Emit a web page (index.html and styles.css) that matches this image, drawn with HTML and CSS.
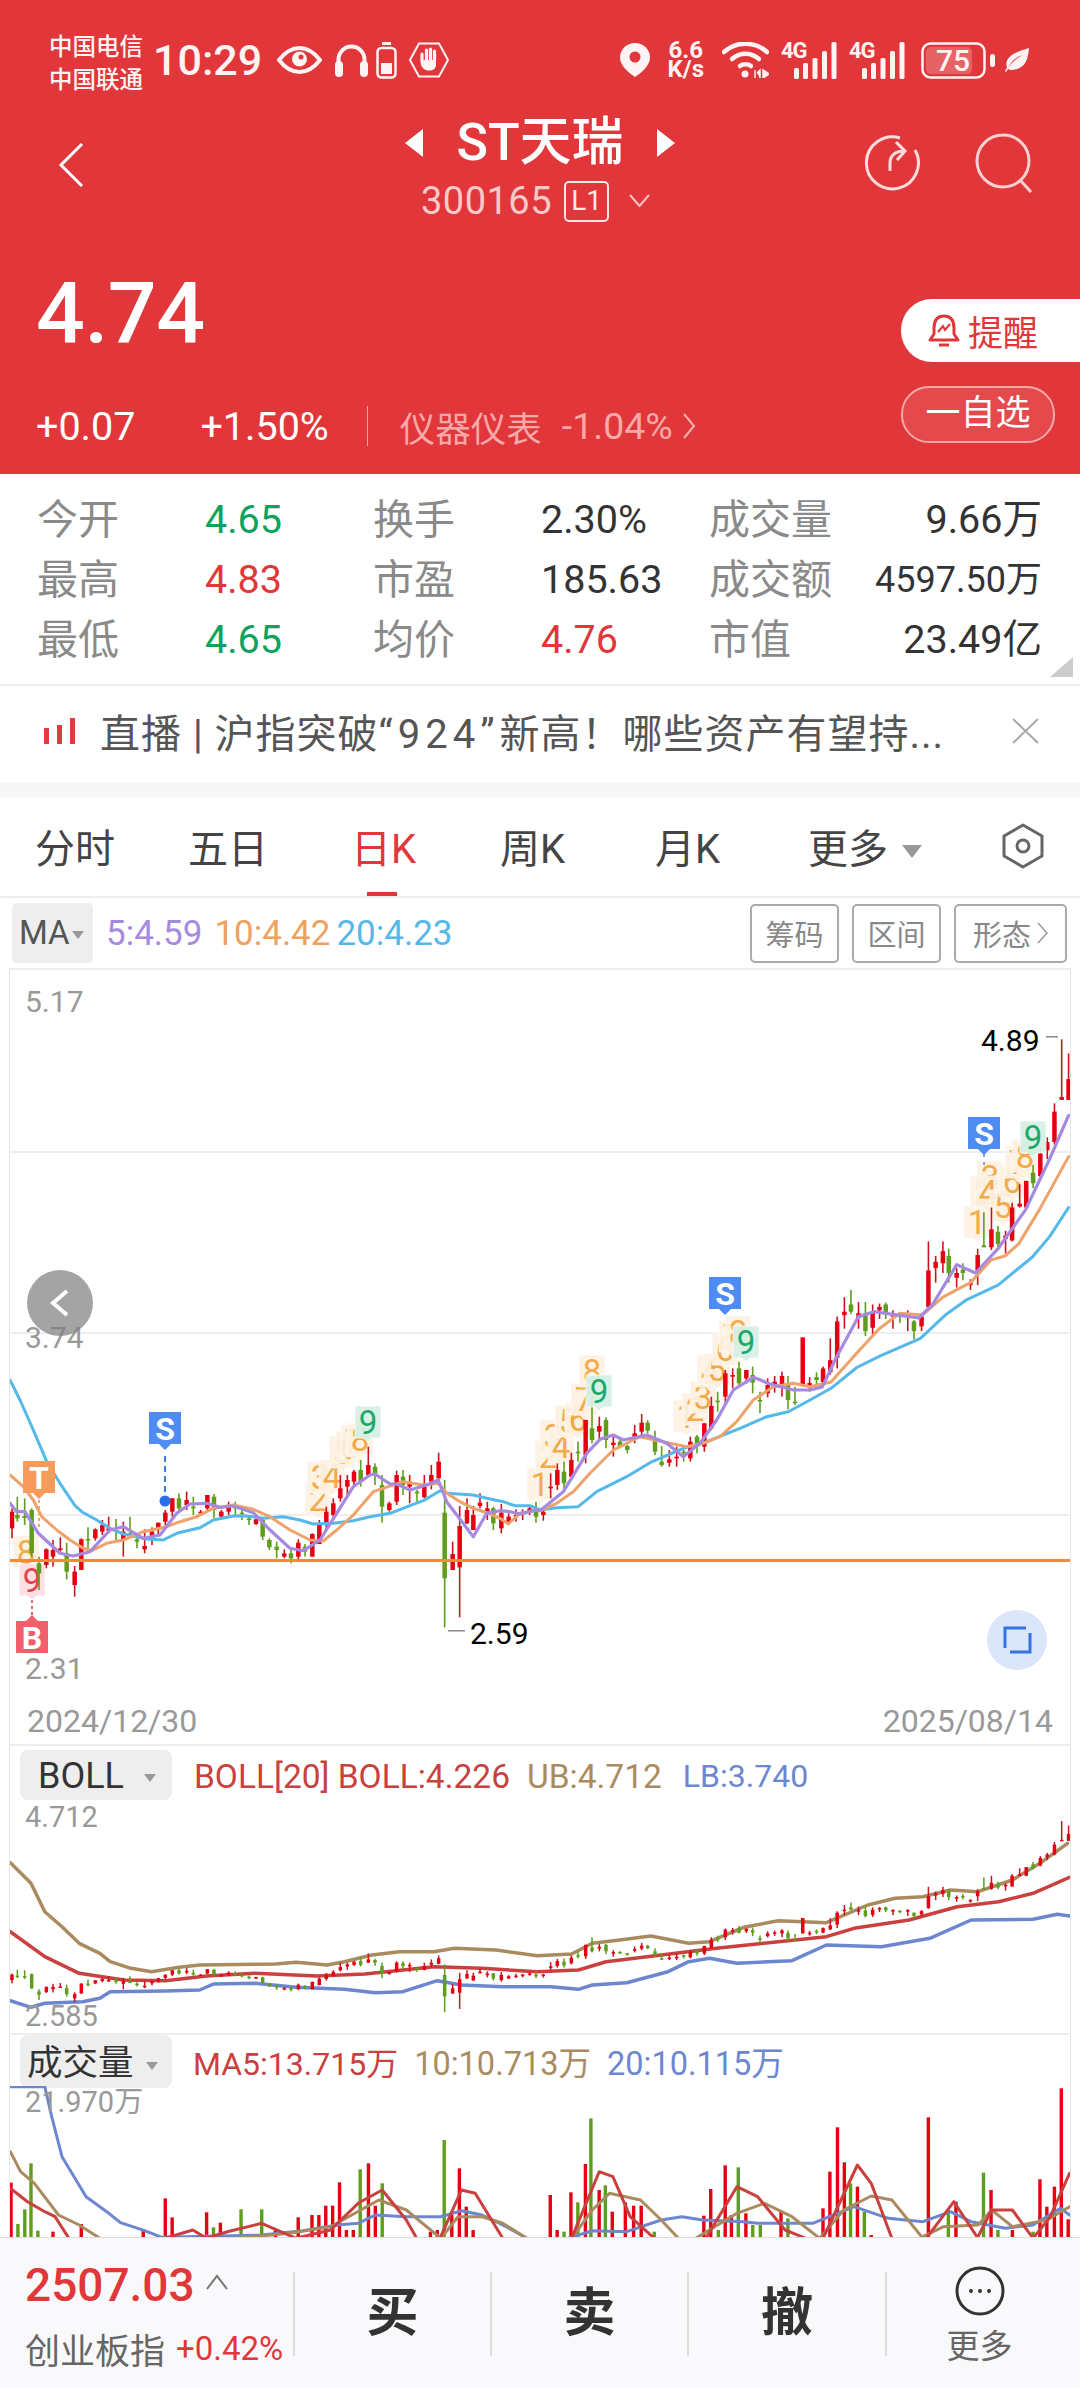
FILE: index.html
```html
<!DOCTYPE html>
<html lang="zh-CN">
<head>
    <meta charset="UTF-8">
    <meta name="viewport" content="width=device-width, initial-scale=1.0">
    <title>ST天瑞 300165</title>
    <link rel="stylesheet" href="styles.css">
</head>
<body>
    <header class="quote-head">
        <div class="status-bar">
            <div class="status-left">
                <div class="carrier"><span>中国电信</span><span>中国联通</span></div>
                <div class="clock">10:29</div>
                <svg class="icon-eye" width="45" height="28" viewBox="0 0 45 28"><path d="M2 14C9 5 15 2 22.5 2S36 5 43 14C36 23 30 26 22.5 26S9 23 2 14Z" fill="none" stroke="#fff3f3" stroke-width="4"/><circle cx="22.5" cy="13" r="7.5" fill="#fff3f3"/><circle cx="24" cy="11" r="2.5" fill="#e1373a"/></svg>
                <svg class="icon-phones" width="33" height="34" viewBox="0 0 33 34"><path d="M3.5 24V16.5a13 13 0 0 1 26 0V24" fill="none" stroke="#fff3f3" stroke-width="4"/><rect x="0" y="18" width="8" height="16" rx="4" fill="#fff3f3"/><rect x="25" y="18" width="8" height="16" rx="4" fill="#fff3f3"/></svg>
                <svg class="icon-cell" width="21" height="37" viewBox="0 0 21 37"><rect x="6" y="0" width="9" height="3" fill="#fff3f3"/><rect x="1.5" y="6" width="18" height="29.5" rx="4" fill="none" stroke="#fff3f3" stroke-width="2.5"/><rect x="5" y="21" width="11" height="11" fill="#fff3f3"/></svg>
                <svg class="icon-hand" width="40" height="36" viewBox="0 0 40 36"><polygon points="10,1.500 30,1.500 39,18 30,34.500 10,34.500 1,18" fill="none" stroke="#fff3f3" stroke-width="2"/><path d="M13 12V20M17.500 8V18M21.500 7V18M25.500 9V19" stroke="#fff3f3" stroke-width="3.200" stroke-linecap="round" fill="none"/><path d="M12 18H27V22C27 27 24 28.500 20 28.500C16 28.500 14 27 12 23Z" fill="#fff3f3"/></svg>
            </div>
            <div class="status-right">
                <svg class="icon-pin" width="30" height="34" viewBox="0 0 30 34"><path d="M15 0C6.500 0 0 6.500 0 14.500 0 23 9 30 15 34 21 30 30 23 30 14.500 30 6.500 23.500 0 15 0Z" fill="#fff3f3"/><circle cx="15" cy="14" r="5.500" fill="#e1373a"/></svg>
                <div class="net-speed"><span>6.6</span><span>K/s</span></div>
                <svg class="icon-wifi" width="47" height="36" viewBox="0 0 47 36"><g fill="none" stroke="#fff3f3" stroke-width="4.500" stroke-linecap="round"><path d="M2 10C14 -1 33 -1 45 10"/><path d="M10 17C18 10 29 10 37 17"/><path d="M18 24C21 21.500 26 21.500 29 24"/></g><circle cx="23" cy="32" r="3.500" fill="#fff3f3"/><path d="M33 28V36M38 36V28L35 31M41 28V36L47 32Z" fill="#fff3f3" stroke="#fff3f3" stroke-width="1.500"/></svg>
                <svg class="icon-signal" width="56" height="43" viewBox="0 -6 56 43"><text class="sig-label" x="0" y="16">4G</text><g fill="#fff3f3"><rect x="13" y="26" width="5" height="11" rx="1.500"/><rect x="22" y="21" width="5" height="16" rx="1.500"/><rect x="31.500" y="16" width="5" height="21" rx="1.500"/><rect x="41" y="9" width="5" height="28" rx="1.500"/><rect x="50.500" y="0" width="5" height="37" rx="1.500"/></g></svg>
                <svg class="icon-signal second" width="56" height="43" viewBox="0 -6 56 43"><text class="sig-label" x="0" y="16">4G</text><g fill="#fff3f3"><rect x="13" y="26" width="5" height="11" rx="1.500"/><rect x="22" y="21" width="5" height="16" rx="1.500"/><rect x="31.500" y="16" width="5" height="21" rx="1.500"/><rect x="41" y="9" width="5" height="28" rx="1.500"/><rect x="50.500" y="0" width="5" height="37" rx="1.500"/></g></svg>
                <svg class="icon-battery" width="74" height="37" viewBox="0 0 74 37"><rect x="1.500" y="1.500" width="62" height="34" rx="8" fill="none" stroke="#fff3f3" stroke-width="2.500"/><rect x="5" y="5" width="46" height="27" rx="5" fill="#fff" fill-opacity="0.22"/><rect x="69" y="12" width="5" height="13" rx="2.500" fill="#fff3f3"/><text class="batt-label" x="32" y="29" text-anchor="middle">75</text></svg>
                <svg class="icon-leaf" width="24" height="24" viewBox="0 0 24 24"><path d="M24 0C23 9 22 21 7 22 5.500 22 4 21.500 3 21L1 24 0 23 2 19.500C-2 8 14 3 24 0ZM3 20C8 13 12 10 18 7 11 9 6 13 3 20Z" fill="#fff3f3" fill-rule="evenodd"/></svg>
            </div>
        </div>

        <div class="nav-row">
            <div class="nav-back">
                <svg width="26" height="46" viewBox="0 0 26 46"><path d="M24 2L3 23L24 44" fill="none" stroke="#fff" stroke-width="3"/></svg>
            </div>
            <div class="nav-title">
                <div class="title-line">
                    <span class="arrow-left"></span>
                    <span class="stock-name">ST天瑞</span>
                    <span class="arrow-right"></span>
                </div>
                <div class="code-line">
                    <span class="stock-code">300165</span>
                    <span class="level-tag">L1</span>
                    <svg class="code-caret" width="21" height="14" viewBox="0 0 21 14"><path d="M1 1L10.500 12L20 1" fill="none" stroke="#f9c3c3" stroke-width="2"/></svg>
                </div>
            </div>
            <div class="nav-actions">
                <svg width="58" height="58" viewBox="0 0 58 58"><path d="M37 5A26 26 0 1 0 52 17" fill="none" stroke="#fbdcdc" stroke-width="3"/><path d="M27 38V30C27 23 32 18 41 18M33 9L42 18L34 27" fill="none" stroke="#fbdcdc" stroke-width="3"/></svg>
                <svg width="58" height="60" viewBox="0 0 58 60"><circle cx="28" cy="28" r="26" fill="none" stroke="#fbd0d0" stroke-width="3"/><path d="M45 47L56 59" stroke="#fbd0d0" stroke-width="3"/></svg>
            </div>
        </div>

        <div class="price-block">
            <div class="price-left">
                <div class="last-price">4.74</div>
                <div class="change-row">
                    <span class="chg-abs">+0.07</span>
                    <span class="chg-pct">+1.50%</span>
                    <span class="chg-divider"></span>
                    <span class="sector-name">仪器仪表</span>
                    <span class="sector-pct">-1.04%</span>
                    <svg width="14" height="28" viewBox="0 0 14 28"><path d="M2 2L12 14L2 26" fill="none" stroke="#f9b0b0" stroke-width="2"/></svg>
                </div>
            </div>
            <div class="price-right">
                <div class="remind-btn">
                    <svg width="32" height="36" viewBox="0 0 32 36"><path d="M16 3C8 3 6 9 6 15V21L2 27H30L26 21V15C26 9 24 3 16 3Z" fill="none" stroke="#e1373a" stroke-width="3" stroke-linejoin="round"/><path d="M11 32H21" stroke="#e1373a" stroke-width="3"/><path d="M10 19L15 13L17 17L22 11" fill="none" stroke="#e1373a" stroke-width="2"/></svg>
                    <span>提醒</span>
                </div>
                <div class="watch-btn">一自选</div>
            </div>
        </div>
    </header>

    <section class="stats">
        <span class="stat-label">今开</span><span class="stat-val green">4.65</span>
        <span class="stat-label">换手</span><span class="stat-val">2.30%</span>
        <span class="stat-label">成交量</span><span class="stat-val right">9.66万</span>
        <span class="stat-label">最高</span><span class="stat-val red">4.83</span>
        <span class="stat-label">市盈</span><span class="stat-val">185.63</span>
        <span class="stat-label">成交额</span><span class="stat-val right small">4597.50万</span>
        <span class="stat-label">最低</span><span class="stat-val green">4.65</span>
        <span class="stat-label">均价</span><span class="stat-val red">4.76</span>
        <span class="stat-label">市值</span><span class="stat-val right wide">23.49亿</span>
        <span class="stats-corner"></span>
    </section>

    <section class="live-banner">
        <svg width="32" height="26" viewBox="0 0 32 26"><rect x="0" y="10" width="5" height="16" fill="#dc3b40"/><rect x="13" y="7" width="5" height="19" fill="#dc3b40"/><rect x="26" y="0" width="5" height="26" fill="#dc3b40"/></svg>
        <span class="live-text">直播 | 沪指突破<span class="live-num">“924”</span>新高！哪些资产有望持...</span>
        <svg width="27" height="26" viewBox="0 0 27 26"><path d="M1 1L26 25M26 1L1 25" stroke="#a8a8a8" stroke-width="2"/></svg>
    </section>

    <nav class="period-tabs">
        <span>分时</span>
        <span>五日</span>
        <span class="active">日K</span>
        <span>周K</span>
        <span>月K</span>
        <span class="more-tab">更多<i class="tri"></i></span>
        <svg width="42" height="46" viewBox="0 0 42 46"><polygon points="21,2 40,13 40,33 21,44 2,33 2,13" fill="none" stroke="#666" stroke-width="3" stroke-linejoin="round"/><circle cx="21" cy="23" r="6" fill="none" stroke="#666" stroke-width="3"/></svg>
    </nav>

    <div class="ma-row">
        <div class="ma-select">MA<i class="tri tiny"></i></div>
        <span class="ma-5">5:4.59</span>
        <span class="ma-10">10:4.42</span>
        <span class="ma-20">20:4.23</span>
        <div class="tool-btns">
            <span class="tool-btn">筹码</span>
            <span class="tool-btn">区间</span>
            <span class="tool-btn">形态<svg width="11" height="22" viewBox="0 0 11 22"><path d="M1 1L10 11L1 21" fill="none" stroke="#999" stroke-width="1.500"/></svg></span>
        </div>
    </div>

    <section class="panel kline-panel">
        <svg id="kline" class="chart" width="1060" height="727" viewBox="10 970 1060 727"></svg>
        <div class="date-row"><span>2024/12/30</span><span>2025/08/14</span></div>
    </section>

    <section class="panel boll-panel">
        <div class="legend-row">
            <div class="ind-select">BOLL<i class="tri tiny"></i></div>
            <span class="leg-red">BOLL[20] BOLL:4.226</span>
            <span class="leg-tan">UB:4.712</span>
            <span class="leg-blue">LB:3.740</span>
        </div>
        <svg id="boll" class="chart" width="1060" height="233" viewBox="10 1800 1060 233"></svg>
    </section>

    <section class="panel vol-panel">
        <div class="legend-row">
            <div class="ind-select cjk">成交量<i class="tri tiny"></i></div>
            <span class="leg-red">MA5:13.715万</span>
            <span class="leg-tan">10:10.713万</span>
            <span class="leg-blue">20:10.115万</span>
        </div>
        <svg id="vol" class="chart" width="1060" height="151" viewBox="10 2086 1060 151"></svg>
    </section>

    <footer class="trade-bar">
        <div class="index-box">
            <div class="index-top"><span class="index-val">2507.03</span><svg width="24" height="16" viewBox="0 0 24 16"><path d="M2 15L12 2L22 15" fill="none" stroke="#777" stroke-width="2"/></svg></div>
            <div class="index-bottom"><span class="index-name">创业板指</span><span class="index-pct">+0.42%</span></div>
        </div>
        <div class="trade-btn">买</div>
        <div class="trade-btn">卖</div>
        <div class="trade-btn">撤</div>
        <div class="trade-more">
            <svg width="50" height="50" viewBox="0 0 50 50"><circle cx="25" cy="25" r="23" fill="none" stroke="#333" stroke-width="3"/><circle cx="16" cy="25" r="2" fill="#333"/><circle cx="25" cy="25" r="2" fill="#333"/><circle cx="34" cy="25" r="2" fill="#333"/></svg>
            <span>更多</span>
        </div>
    </footer>

    <script src="chart.js"></script>
</body>
</html>
```

FILE: styles.css
```css
* {
    box-sizing: border-box;
}

html, body {
    margin: 0;
    padding: 0;
}

body {
    width: 1080px;
    height: 2388px;
    overflow: hidden;
    background-color: #fff;
    font-family: Roboto, "Noto Sans CJK SC", sans-serif;
    color: #333;
}

/* red header */
.quote-head {
    height: 474px;
    background-color: #e1373a;
    color: #fff;
}

.status-bar {
    height: 100px;
    padding: 20px 51px 0 49px;
    display: flex;
    justify-content: space-between;
    align-items: center;
}

.status-left,
.status-right {
    display: flex;
    align-items: center;
}

.carrier {
    display: flex;
    flex-direction: column;
    margin-top: 7px;
    font-size: 23.5px;
    font-weight: 500;
    line-height: 33px;
    color: #fff3f3;
    white-space: nowrap;
}

.clock {
    margin-left: 10px;
    font-size: 43px;
    font-weight: 500;
    color: #fff3f3;
}

.icon-eye { margin-left: 15px; }
.icon-phones { margin-left: 13px; }
.icon-cell { margin-left: 8px; }
.icon-hand { margin-left: 12px; }

.net-speed {
    display: flex;
    flex-direction: column;
    align-items: center;
    margin-left: 18px;
    font-size: 24px;
    font-weight: 700;
    line-height: 19px;
    color: #fff3f3;
}

.icon-wifi { margin-left: 18px; }
.icon-signal { margin: -6px 0 0 12px; }
.icon-battery { margin-left: 16px; }
.icon-leaf { margin-left: 10px; }

.sig-label {
    font-size: 22px;
    font-weight: 700;
    letter-spacing: -1px;
    fill: #fff3f3;
}

.batt-label {
    font-size: 30px;
    font-weight: 500;
    fill: #fff3f3;
}

.nav-row {
    height: 122px;
    padding: 12px 58px 0 58px;
    display: grid;
    grid-template-columns: 1fr auto 1fr;
    align-items: center;
}

.nav-back {
    margin-bottom: 10px;
}

.nav-back svg {
    display: block;
}

.nav-actions {
    display: flex;
    justify-content: flex-end;
    gap: 54px;
    margin: 0 -11px 14px 0;
}

.nav-title {
    display: flex;
    flex-direction: column;
    align-items: center;
}

.title-line {
    display: flex;
    align-items: center;
    height: 62px;
    gap: 33px;
}

.stock-name {
    font-size: 52px;
    font-weight: 500;
    line-height: 62px;
}

.arrow-left,
.arrow-right {
    width: 0;
    height: 0;
    border-top: 14px solid transparent;
    border-bottom: 14px solid transparent;
}

.arrow-left { border-right: 18px solid #fff; }
.arrow-right { border-left: 18px solid #fff; }

.code-line {
    display: flex;
    align-items: center;
    height: 54px;
    margin-right: 9px;
    color: #f9c9c9;
}

.stock-code {
    font-size: 38px;
    letter-spacing: 0.5px;
}

.level-tag {
    width: 45px;
    height: 41px;
    margin-left: 12px;
    border: 2px solid #fde6e6;
    border-radius: 5px;
    font-size: 28px;
    line-height: 36px;
    text-align: center;
    color: #fde6e6;
}

.code-caret {
    margin-left: 20px;
}

.price-block {
    display: flex;
    justify-content: space-between;
    height: 252px;
}

.price-left {
    padding-left: 36px;
}

.last-price {
    margin-top: 48px;
    font-size: 86px;
    font-weight: 500;
    line-height: 88px;
    letter-spacing: -0.5px;
}

.change-row {
    display: flex;
    align-items: center;
    height: 48px;
    margin-top: 44px;
    font-size: 39.5px;
}

.chg-pct { margin-left: 65px; }

.chg-divider {
    width: 1px;
    height: 40px;
    margin: 0 32px 0 38px;
    background-color: #f2a0a0;
}

.sector-name {
    font-size: 35.5px;
    color: #f7a8a8;
}

.sector-pct {
    margin: 0 9px 0 20px;
    font-size: 37.5px;
    color: #f7a8a8;
}

.price-right {
    width: 179px;
    padding-top: 77px;
}

.remind-btn {
    display: flex;
    align-items: center;
    height: 63px;
    padding-left: 27px;
    gap: 8px;
    border-radius: 31px 0 0 31px;
    background-color: #fff;
    font-size: 35px;
    color: #e1373a;
}

.watch-btn {
    width: 154px;
    height: 57px;
    margin-top: 24px;
    border: 2px solid #f3a8a8;
    border-radius: 28px;
    background-color: #e5494c;
    font-size: 35px;
    line-height: 51px;
    text-align: center;
}

/* quote stats */
.stats {
    position: relative;
    height: 210px;
    padding: 16px 38px 0 37px;
    display: grid;
    grid-template-columns: 168px 168px 168px 168px 134px 199px;
    grid-auto-rows: 60px;
    align-items: center;
}

.stat-label {
    font-size: 41px;
    color: #8a8a8a;
    line-height: 60px;
}

.stat-val {
    font-size: 39.5px;
    color: #333;
    line-height: 60px;
}

.stat-val.right {
    justify-self: end;
    white-space: nowrap;
}

.stat-val.small {
    font-size: 36px;
}

.stat-val.green { color: #0da35e; }
.stat-val.red { color: #e1373a; }

.stats-corner {
    position: absolute;
    right: 7px;
    bottom: 7px;
    width: 0;
    height: 0;
    border-bottom: 20px solid #ccc;
    border-left: 23px solid transparent;
}

.live-banner {
    height: 113px;
    padding: 0 41px 6px 44px;
    display: flex;
    align-items: center;
    justify-content: space-between;
    border-top: 2px solid #eee;
    border-bottom: 15px solid #f7f7f7;
}

.live-text {
    flex: 1;
    margin-left: 24px;
    font-size: 40px;
    letter-spacing: 1px;
    color: #555;
    white-space: nowrap;
}

.live-num {
    letter-spacing: 5px;
}

/* period tabs */
.period-tabs {
    height: 101px;
    padding: 0 0 2px 35px;
    display: grid;
    grid-template-columns: 153px 163px 149px 155px 153px 194px 42px;
    align-items: center;
    border-bottom: 2px solid #eee;
    font-size: 40px;
    color: #444;
}

.period-tabs .active {
    position: relative;
    color: #e1373a;
}

.period-tabs .active::after {
    content: "";
    position: absolute;
    left: 16px;
    bottom: -21px;
    width: 30px;
    height: 4px;
    background-color: #e1373a;
}

.tri {
    display: inline-block;
    width: 0;
    height: 0;
    margin-left: 14px;
    vertical-align: middle;
    border-top: 13px solid #999;
    border-left: 10px solid transparent;
    border-right: 10px solid transparent;
}

.tri.tiny {
    margin-left: 10px;
    border-top: 8px solid #999;
    border-left: 6px solid transparent;
    border-right: 6px solid transparent;
}

.ma-row {
    height: 70px;
    padding: 5px 13px 5px 12px;
    display: flex;
    align-items: center;
    font-size: 35px;
}

.ma-select {
    width: 81px;
    height: 60px;
    border-radius: 5px;
    background-color: #eee;
    font-size: 33px;
    line-height: 60px;
    padding-left: 7px;
    color: #555;
    white-space: nowrap;
}

.ma-select .tri.tiny {
    margin-left: 2px;
}

.ma-5 { margin-left: 13px; color: #a58ae0; }
.ma-10 { margin-left: 12px; color: #efa25f; }
.ma-20 { margin-left: 6px; color: #55b8ea; }

.tool-btns {
    margin-left: auto;
    display: flex;
    gap: 13px;
}

.tool-btn {
    display: flex;
    align-items: center;
    justify-content: center;
    gap: 6px;
    width: 89px;
    height: 59px;
    border: 2px solid #aaa;
    border-radius: 5px;
    font-size: 29px;
    color: #888;
}

.tool-btn:last-child {
    width: 113px;
}

/* chart panels */
.panel {
    margin: 0 9px;
    border-top: 2px solid #eee;
    border-left: 1px solid #e6e6e6;
    border-right: 1px solid #e6e6e6;
}

.chart {
    display: block;
    overflow: hidden;
}

.kline-panel {
    height: 776px;
}

.date-row {
    height: 47px;
    padding: 0 17px;
    display: flex;
    justify-content: space-between;
    align-items: center;
    font-size: 32px;
    color: #999;
}

.boll-panel {
    height: 289px;
}

.vol-panel {
    height: 204px;
}

.legend-row {
    display: flex;
    align-items: center;
    height: 54px;
    padding: 6px 0 0 10px;
    font-size: 33.5px;
    white-space: nowrap;
}

.vol-panel .legend-row {
    height: 51px;
    padding-top: 0;
    font-size: 32.5px;
}

.ind-select {
    align-self: flex-start;
    width: 152px;
    height: 50px;
    margin-top: -2px;
    padding-left: 18px;
    margin-right: 22px;
    border-radius: 8px;
    background-color: #eee;
    font-size: 36px;
    line-height: 53px;
    color: #333;
}

.ind-select.cjk {
    height: 53px;
    margin-top: 0;
    margin-right: 21px;
    padding-left: 7px;
    line-height: 56px;
    font-size: 35.5px;
}

.ind-select .tri.tiny {
    margin-left: 20px;
}

.ind-select.cjk .tri.tiny {
    margin-left: 12px;
}

.leg-red { color: #c9403f; }
.leg-tan { margin-left: 17px; color: #a98b5f; }
.leg-blue { margin-left: 21px; font-size: 32px; color: #6c87cf; }

.vol-panel .leg-red {
    font-size: 32px;
}

.vol-panel .leg-tan,
.vol-panel .leg-blue {
    margin-left: 16px;
    font-size: 32.5px;
}

.axis-label {
    font-size: 30px;
    fill: #999;
}

.axis-label.small {
    font-size: 29px;
}

.peak-label {
    font-size: 30px;
    fill: #000;
}

.tag-digit {
    font-size: 33px;
    text-anchor: middle;
}

.badge-letter {
    font-size: 32px;
    font-weight: 700;
    text-anchor: middle;
    fill: #fff;
}

/* bottom trade bar */
.trade-bar {
    height: 151px;
    padding-top: 34px;
    display: grid;
    grid-template-columns: 293px 197px 197px 198px 195px;
    grid-auto-rows: 84px;
    border-top: 1px solid #ddd;
    background-color: #f9f9fb;
}

.index-box {
    padding-left: 25px;
}

.index-top {
    display: flex;
    align-items: center;
    height: 40px;
    margin-top: -7px;
}

.index-top svg {
    margin: 0 0 6px 10px;
}

.index-val {
    font-size: 46px;
    font-weight: 500;
    line-height: 40px;
    color: #e1373a;
}

.index-bottom {
    display: flex;
    align-items: center;
    margin-top: 18px;
}

.index-name {
    font-size: 35px;
    color: #666;
}

.index-pct {
    margin-left: 11px;
    font-size: 33px;
    color: #e1373a;
}

.trade-btn {
    border-left: 2px solid #ddd;
    font-size: 52px;
    font-weight: 700;
    line-height: 84px;
    text-align: center;
    color: #333;
}

.trade-more {
    border-left: 2px solid #ddd;
    padding-right: 8px;
    font-size: 33px;
    color: #666;
    text-align: center;
}

.trade-more svg {
    display: block;
    margin: -6px auto 0;
}

.trade-more span {
    display: block;
    margin-top: 9px;
    line-height: 44px;
}
```

FILE: chart.js
```js
// K line, BOLL and volume panels. Values were read off the quote screen in
// screen pixels, then mapped to each panel.
const SVG_NS = 'http://www.w3.org/2000/svg';
const RED = '#e60012';
const RED_WICK = '#c8141e';
const GREEN = '#5f9e1c';

function el(parent, name, attrs, text) {
    const node = document.createElementNS(SVG_NS, name);
    for (const key in attrs) {
        node.setAttribute(key, attrs[key]);
    }
    if (text !== undefined) {
        node.textContent = text;
    }
    parent.appendChild(node);
    return node;
}

// scale a block of [x, y] points to screen pixels
function points(list, ox, oy, sx, sy) {
    return list.map(p => [ox + p[0] / sx, oy + p[1] / sy]);
}

// [x, high, low, bodyTop, bodyBottom, isRed]
function candles(list, ox, oy, sx, sy) {
    return list.map(c => ({
        x: ox + c[0] / sx,
        hi: oy + c[1] / sy,
        lo: oy + c[2] / sy,
        top: oy + c[3] / sy,
        bot: oy + c[4] / sy,
        up: c[5] === 1
    }));
}

const kData = [].concat(
    candles([
        [36,505,595,515,565,1],[52,470,545,525,535,0],[74,475,555,528,534,0],[95,505,650,510,640,0],
        [117,650,750,670,700,0],[139,625,685,628,675,1],[159,600,680,630,650,1],[181,592,635,625,630,1],
        [200,608,718,640,695,0],[224,678,770,695,735,1],[244,595,690,598,690,1],[264,562,625,597,600,0],
        [286,565,602,568,595,1],[307,540,585,555,575,1],[326,530,580,565,572,1],[348,537,600,570,575,0],
        [370,545,650,575,600,1],[390,530,590,580,585,0],[411,585,625,598,605,0],[434,568,640,618,628,1],
        [456,562,615,575,595,1],[475,548,590,548,570,1],[496,510,555,518,545,1],[517,475,530,475,515,1],
        [537,460,515,475,505,0],[560,455,510,480,495,1],[580,470,525,500,505,0],[602,510,525,515,520,1],
        [622,465,510,465,505,1],[642,462,535,470,510,0],[664,510,535,515,530,1],[686,485,525,495,515,1],
        [706,485,525,500,505,0],[726,505,540,518,521,0],[747,525,555,535,540,0],[768,535,555,538,552,1],
        [788,535,600,540,590,0],[808,595,630,600,622,0]
    ], 0, 1340, 3, 3),
    candles([
        [20,605,655,620,630,0],[43,628,655,640,650,1],[63,628,670,640,655,0],[85,598,658,608,650,1],
        [105,612,650,620,635,0],[127,580,650,582,650,1],[148,540,612,552,612,1],[169,500,570,515,555,1],
        [190,475,535,490,525,1],[211,405,485,445,475,1],[232,405,470,420,440,1],[252,390,435,395,425,1],
        [272,360,440,390,425,0],[295,320,405,375,405,1],[315,370,435,380,405,0],[336,405,548,435,500,0],
        [358,485,515,490,510,1],[380,392,495,405,485,1],[399,390,465,410,435,0],[419,405,490,425,440,1],
        [441,450,490,455,460,0],[463,405,475,435,472,1],[484,375,448,405,425,1],[506,338,420,365,415,1],
        [524,420,862,518,715,0],[548,605,690,642,690,1],[569,498,832,558,682,1],[591,475,552,510,550,1],
        [610,498,570,525,570,1],[630,460,505,488,498,1],[652,485,540,505,520,1],[670,500,570,505,550,0],
        [694,492,580,518,565,1],[716,520,555,530,550,1],[738,508,545,525,530,1],[758,508,540,515,520,1],
        [779,495,525,505,512,1],[798,485,548,515,530,0]
    ], 270, 1340, 3, 3),
    candles([
        [10,808,842,815,825,1],[32,700,775,740,745,1],[52,670,750,690,735,1],[72,665,750,695,730,0],
        [94,638,720,660,710,1],[114,605,665,635,640,0],[137,540,670,540,645,1],[156,470,610,565,600,0],
        [178,530,600,558,575,1],[198,532,625,540,600,0],[220,590,650,608,615,1],[240,600,625,605,618,0],
        [262,615,640,618,630,0],[284,555,610,580,595,1],[305,522,590,548,575,1],[323,540,580,548,572,0],
        [345,572,645,600,635,0],[365,618,680,665,675,0],[388,630,680,658,668,1],[410,620,680,650,655,1],
        [431,630,665,635,640,0],[451,590,665,605,655,1],[471,585,640,590,620,0],[493,550,635,550,620,1],
        [514,470,570,498,565,1],[533,455,515,482,485,0],[556,390,495,400,470,1],[578,385,445,405,410,1],
        [597,365,435,385,430,0],[619,390,430,390,415,1],[638,380,460,405,428,0],[660,455,520,480,483,0],
        [683,415,472,435,460,1],[704,408,458,425,432,1],[726,395,470,408,435,1],[744,408,508,430,480,0],
        [765,440,495,485,488,0]
    ], 540, 1240, 3, 3),
    candles([
        [763,758,856,758,856,1],[783,840,870,852,858,1],[803,830,860,840,846,0],[822,818,855,822,850,1],
        [843,760,835,805,830,1],[863,715,822,725,800,1],[884,675,740,705,712,1],[903,660,710,690,705,0],
        [925,685,740,708,718,1],[945,685,755,710,745,0],[966,690,752,705,738,1],[986,688,720,695,702,1],
        [1004,686,720,690,710,0],[1025,702,740,708,715,1],[1045,708,728,712,716,0],[1068,702,745,708,712,1],
        [1086,722,762,725,745,0],[1108,708,745,715,735,1],[1128,560,700,620,695,1],[1149,590,645,602,615,1],
        [1170,560,625,580,605,1],[1187,575,645,590,625,0],[1210,615,655,625,635,1],[1228,605,640,618,625,0],
        [1250,638,660,645,650,1],[1271,575,650,588,620,1],[1289,500,572,568,572,0],[1311,490,578,535,572,1],
        [1330,528,575,540,565,0],[1352,538,585,548,555,1],[1371,480,560,490,558,1],[1393,442,490,482,488,1],
        [1412,435,492,435,490,1],[1432,402,450,418,440,0],[1453,365,430,378,425,1],[1473,345,390,355,372,1],
        [1494,275,360,292,355,1],[1515,143,268,262,268,1],[1535,172,268,225,268,1]
    ], 540, 970, 2.904, 2.063)
);

const ma20 = [].concat(
    points([[30,120],[60,180],[100,270],[140,365],[180,430],[225,497],[245,515],[290,540],[330,565],[370,582],[410,590],[440,597],[490,600],[530,580],[600,563],[640,540],[700,528],[740,528],[790,535]], 0, 1340, 3, 3),
    points([[40,530],[90,540],[130,552],[190,550],[250,542],[300,530],[360,520],[420,497],[460,482],[510,452],[530,460],[610,465],[650,475],[700,485],[735,497],[780,497],[810,510]], 270, 1340, 3, 3),
    points([[0,810],[50,803],[115,800],[170,755],[260,710],[330,668],[430,625],[500,605],[600,565],[680,530],[745,515],[810,480]], 540, 1240, 3, 3),
    points([[845,863],[920,820],[985,797],[1105,760],[1180,710],[1240,680],[1330,650],[1430,592],[1480,550],[1535,490]], 540, 970, 2.904, 2.063)
);

const ma10 = [].concat(
    points([[30,405],[70,440],[100,480],[125,530],[170,570],[210,600],[250,625],[275,632],[320,610],[370,600],[430,575],[500,560],[540,545],[590,530],[640,505],[700,495],[760,508],[810,530]], 0, 1340, 3, 3),
    points([[60,570],[120,600],[160,603],[200,570],[250,525],[310,455],[400,425],[460,435],[505,430],[530,460],[570,485],[610,505],[650,518],[690,535],[715,552],[750,520],[800,510]], 270, 1340, 3, 3),
    points([[0,812],[50,790],[100,755],[150,700],[220,630],[300,590],[390,610],[440,620],[490,610],[540,590],[590,545],[640,480],[700,440],[760,430],[810,440]], 540, 1240, 3, 3),
    points([[845,850],[920,790],[985,740],[1045,708],[1110,712],[1170,675],[1250,645],[1310,598],[1350,590],[1390,565],[1450,495],[1535,385]], 540, 970, 2.904, 2.063)
);

const ma5 = [].concat(
    points([[30,490],[50,515],[75,515],[115,580],[180,640],[220,648],[270,635],[330,570],[370,560],[430,595],[480,585],[530,520],[570,492],[620,490],[660,502],[700,498],[760,518],[810,570]], 0, 1340, 3, 3),
    points([[60,625],[100,632],[150,600],[200,520],[250,440],[300,405],[315,402],[360,432],[380,432],[420,450],[470,435],[505,420],[530,485],[610,590],[650,520],[690,512],[720,515],[750,522],[800,510]], 270, 1340, 3, 3),
    points([[0,812],[70,755],[140,640],[180,598],[220,585],[250,600],[320,585],[380,610],[430,650],[480,610],[530,540],[580,450],[640,412],[690,432],[760,450],[810,450]], 540, 1240, 3, 3),
    points([[820,860],[860,800],[925,715],[970,705],[1040,712],[1100,718],[1140,690],[1210,608],[1265,625],[1330,575],[1410,495],[1480,390],[1535,300]], 540, 970, 2.904, 2.063)
);

// nine-turn digit tags: [x, y, digit]
const turnTags = [
    [26,1553,'8'],
    [318,1500,'2'],[320,1478,'3'],[332,1477,'4'],[342,1453,'5'],[349,1448,'6'],[354,1442,'7'],[360,1440,'8'],
    [540,1485,'1'],[548,1457,'2'],[553,1437,'3'],[561,1447,'4'],[568,1422,'5'],[578,1420,'6'],[584,1400,'7'],[592,1372,'8'],
    [686,1417,'1'],[695,1410,'2'],[703,1398,'3'],[710,1372,'4'],[717,1370,'5'],[725,1350,'6'],[732,1337,'7'],[738,1333,'8'],
    [977,1223,'1'],[983,1193,'2'],[990,1178,'3'],[988,1193,'4'],[1003,1207,'5'],[1012,1182,'6'],[1018,1163,'7'],[1025,1157,'8']
];

const nineTags = [[368,1423],[599,1392],[746,1343],[1033,1138]];

function polyline(parent, pts, color, width) {
    el(parent, 'polyline', {
        points: pts.map(p => p[0].toFixed(1) + ',' + p[1].toFixed(1)).join(' '),
        fill: 'none',
        stroke: color,
        'stroke-width': width,
        'stroke-linejoin': 'round',
        'stroke-linecap': 'round'
    });
}

function drawCandles(parent, data, bodyW, wickW, mapY) {
    data.forEach(c => {
        const top = mapY(c.top);
        const bot = mapY(c.bot);
        el(parent, 'rect', {
            x: c.x - wickW / 2, y: mapY(c.hi), width: wickW, height: mapY(c.lo) - mapY(c.hi),
            fill: c.up ? RED_WICK : GREEN
        });
        el(parent, 'rect', {
            x: c.x - bodyW / 2, y: top, width: bodyW, height: Math.max(bot - top, 1.5),
            fill: c.up ? RED : GREEN
        });
    });
}

function digitTag(parent, x, y, digit, bg, color, opacity) {
    const g = el(parent, 'g', { opacity: opacity });
    el(g, 'path', {
        d: `M${x - 13} ${y - 17}h26v32h-9l-4 4l-4 -4h-9z`,
        fill: bg, stroke: '#fff', 'stroke-width': 0.8
    });
    el(g, 'text', { class: 'tag-digit', x: x, y: y + 11, fill: color }, digit);
}

function badge(parent, x, y, letter, color, tipUp) {
    const d = tipUp
        ? `M${x - 16} ${y + 6}h10l6 -6l6 6h10v32h-32z`
        : `M${x - 16} ${y}h32v32h-10l-6 6l-6 -6h-10z`;
    el(parent, 'path', { d: d, fill: color });
    el(parent, 'text', { class: 'badge-letter', x: x, y: y + (tipUp ? 34 : 28) }, letter);
}

function drawKline() {
    const svg = document.getElementById('kline');

    [1152, 1333, 1515].forEach(y => {
        el(svg, 'rect', { x: 10, y: y - 1, width: 1060, height: 2, fill: '#eeeeee' });
    });

    turnTags.forEach(t => digitTag(svg, t[0], t[1], t[2], '#fdf1e2', '#f2a53c', 0.92));
    digitTag(svg, 32, 1581, '9', '#fbdfe2', '#e3404c', 1);

    drawCandles(svg, kData, 4.5, 1.6, y => y);

    el(svg, 'rect', { x: 10, y: 1559, width: 1060, height: 3, fill: '#f08a3c' });

    polyline(svg, ma20, '#55b8ea', 3);
    polyline(svg, ma10, '#efa26a', 3);
    polyline(svg, ma5, '#a58ae0', 3.2);

    nineTags.forEach(t => digitTag(svg, t[0], t[1], '9', '#d6f0e4', '#10a564', 0.95));

    // buy/sell flags
    el(svg, 'path', { d: 'M165 1456V1495', stroke: '#3f7fe0', 'stroke-width': 2, 'stroke-dasharray': '6 4' });
    el(svg, 'circle', { cx: 165, cy: 1501, r: 5.5, fill: '#2a6fe8' });
    el(svg, 'path', { d: 'M984 1154V1170', stroke: '#7fa6e8', 'stroke-width': 2, 'stroke-dasharray': '3 5' });
    el(svg, 'path', { d: 'M32 1600V1618', stroke: '#d96a72', 'stroke-width': 2, 'stroke-dasharray': '3 3' });
    el(svg, 'path', { d: 'M39 1494V1530', stroke: '#f4a46a', 'stroke-width': 2, 'stroke-dasharray': '3 3' });
    badge(svg, 165, 1412, 'S', '#4e8cf2');
    badge(svg, 725, 1277, 'S', '#4e8cf2');
    badge(svg, 984, 1117, 'S', '#4e8cf2');
    badge(svg, 39, 1461, 'T', '#f79a5a');
    badge(svg, 32, 1615, 'B', '#f0606c', true);

    // axis labels
    el(svg, 'text', { class: 'axis-label', x: 25, y: 1012 }, '5.17');
    el(svg, 'text', { class: 'axis-label', x: 25, y: 1348 }, '3.74');
    el(svg, 'text', { class: 'axis-label', x: 25, y: 1679 }, '2.31');

    el(svg, 'text', { class: 'peak-label', x: 981, y: 1051 }, '4.89');
    el(svg, 'rect', { x: 1046, y: 1036, width: 12, height: 1.5, fill: '#888' });
    el(svg, 'text', { class: 'peak-label', x: 470, y: 1644 }, '2.59');
    el(svg, 'rect', { x: 448, y: 1630, width: 17, height: 1.5, fill: '#888' });

    // edge handle and fullscreen button
    el(svg, 'ellipse', { cx: 60, cy: 1303, rx: 33, ry: 33, fill: 'rgba(125,125,125,0.7)' });
    el(svg, 'path', { d: 'M67 1291L53 1303L67 1315', fill: 'none', stroke: '#fff', 'stroke-width': 4 });
    el(svg, 'ellipse', { cx: 1017, cy: 1640, rx: 30, ry: 30, fill: '#dbe6fb' });
    el(svg, 'path', { d: 'M1005 1648V1628H1026M1030 1633V1652H1010', fill: 'none', stroke: '#3472e0', 'stroke-width': 3 });
}

function drawBoll() {
    const svg = document.getElementById('boll');
    const mapY = y => 1821 + (y - 1039) * 0.325;
    const pts = list => points(list, 0, 1730, 1.452, 3);

    polyline(svg, pts([[15,398],[45,460],[65,545],[90,590],[115,640],[145,670],[160,695],[190,715],[220,725],[260,712],[290,705],[400,702],[430,697],[475,705],[500,695],[540,675],[580,665],[630,665],[660,655],[720,660],[780,677],[830,672],[860,640],[900,630],[945,618],[1000,640],[1030,635],[1080,592],[1130,572],[1200,578],[1260,525],[1300,505],[1340,500],[1380,480],[1420,485],[1470,450],[1510,400],[1550,340]]), '#a98b5f', 3.5);
    polyline(svg, pts([[15,605],[65,680],[115,730],[180,750],[240,752],[300,738],[370,730],[460,738],[530,732],[630,710],[700,715],[780,725],[840,720],[880,695],[960,675],[1040,655],[1130,635],[1200,620],[1240,595],[1320,570],[1390,530],[1450,515],[1500,490],[1553,442]]), '#c9403f', 3.5);
    polyline(svg, pts([[15,812],[45,832],[65,820],[120,815],[145,805],[160,785],[240,783],[290,780],[310,762],[370,760],[430,772],[500,778],[545,788],[585,785],[635,752],[670,765],[730,770],[800,770],[840,778],[860,765],[910,758],[970,725],[1000,695],[1030,685],[1070,700],[1150,692],[1200,645],[1280,650],[1350,625],[1410,570],[1500,568],[1535,553],[1553,558]]), '#6c87cf', 3.5);

    drawCandles(svg, kData, 3.5, 1.5, mapY);

    el(svg, 'text', { class: 'axis-label small', x: 25, y: 1827 }, '4.712');
    el(svg, 'text', { class: 'axis-label small', x: 25, y: 2026 }, '2.585');
}

function drawVolume() {
    const svg = document.getElementById('vol');
    const base = 2237;
    const toX = x => x / 1.452;
    const toY = y => 2040 + y / 3;
    const pts = list => points(list, 0, 2040, 1.452, 3);

    const redBars = [[16,428],[77,575],[118,552],[208,570],[240,475],[250,532],[300,517],[320,548],[400,570],[433,532],[453,525],[463,525],[473,497],[483,497],[493,427],[503,570],[513,570],[535,370],[545,497],[625,575],[635,570],[656,525],[667,385],[677,500],[687,570],[799,465],[809,570],[829,457],[850,372],[870,450],[889,515],[908,487],[920,497],[931,497],[1022,527],[1032,447],[1053,376],[1062,525],[1083,520],[1134,515],[1195,505],[1205,395],[1216,262],[1226,367],[1245,440],[1265,585],[1348,232],[1388,485],[1439,450],[1470,570],[1510,418],[1520,500],[1531,440],[1541,145],[1551,538]];
    const greenBars = [[26,552],[36,508],[45,370],[55,572],[310,562],[350,508],[380,508],[523,388],[555,430],[645,300],[819,575],[839,487],[858,235],[879,436],[950,575],[1043,570],[1072,382],[1093,555],[1104,555],[1144,535],[1235,430],[1255,515],[1377,510],[1428,398],[1449,570],[1500,575]];

    redBars.forEach(b => el(svg, 'rect', { x: toX(b[0]) - 1.7, y: toY(b[1]), width: 3.4, height: base - toY(b[1]), fill: RED }));
    greenBars.forEach(b => el(svg, 'rect', { x: toX(b[0]) - 1.7, y: toY(b[1]), width: 3.4, height: base - toY(b[1]), fill: GREEN }));

    polyline(svg, pts([[15,140],[65,140],[75,230],[90,350],[125,470],[155,515],[175,548],[210,572],[235,592],[380,585],[440,572],[490,555],[520,550],[545,525],[590,530],[640,530],[670,512],[700,525],[735,560],[765,595]]), '#6c87cf', 3);
    polyline(svg, pts([[825,595],[860,572],[910,575],[960,540],[990,530],[1020,540],[1080,545],[1100,550],[1180,550],[1240,500],[1290,535],[1340,545],[1380,515],[1410,545],[1460,565],[1500,555],[1540,505],[1553,525]]), '#6c87cf', 3);

    [
        [[15,335],[30,395],[50,430],[85,525],[115,555],[145,595]],
        [[340,595],[420,580],[480,560],[550,480],[590,510],[640,595]],
        [[640,595],[665,530],[700,530],[730,550],[765,595]],
        [[830,595],[860,510],[885,460],[930,480],[960,540],[985,595]],
        [[1010,595],[1070,520],[1110,490],[1150,530],[1190,595]],
        [[1190,595],[1225,510],[1265,468],[1295,480],[1340,595]],
        [[1340,590],[1370,560],[1420,555],[1440,510],[1470,560],[1520,540],[1553,500]]
    ].forEach(line => polyline(svg, pts(line), '#a98b5f', 3));

    [
        [[15,445],[40,485],[65,515],[80,530],[100,595]],
        [[240,595],[280,570],[300,595],[330,575],[380,550],[430,595],[480,570],[520,490],[555,450],[590,540],[605,595]],
        [[640,590],[670,450],[690,460],[730,595]],
        [[830,595],[870,395],[890,410],[915,530],[950,595]],
        [[1025,595],[1070,440],[1100,470],[1140,570],[1170,595]],
        [[1195,595],[1245,375],[1265,430],[1295,595]],
        [[1345,595],[1385,485],[1420,595]],
        [[1420,590],[1440,510],[1470,510],[1500,595]],
        [[1500,595],[1525,530],[1553,400]]
    ].forEach(line => polyline(svg, pts(line), '#c9403f', 3));

    el(svg, 'text', { class: 'axis-label small', x: 25, y: 2112 }, '21.970万');
}

drawKline();
drawBoll();
drawVolume();
```
